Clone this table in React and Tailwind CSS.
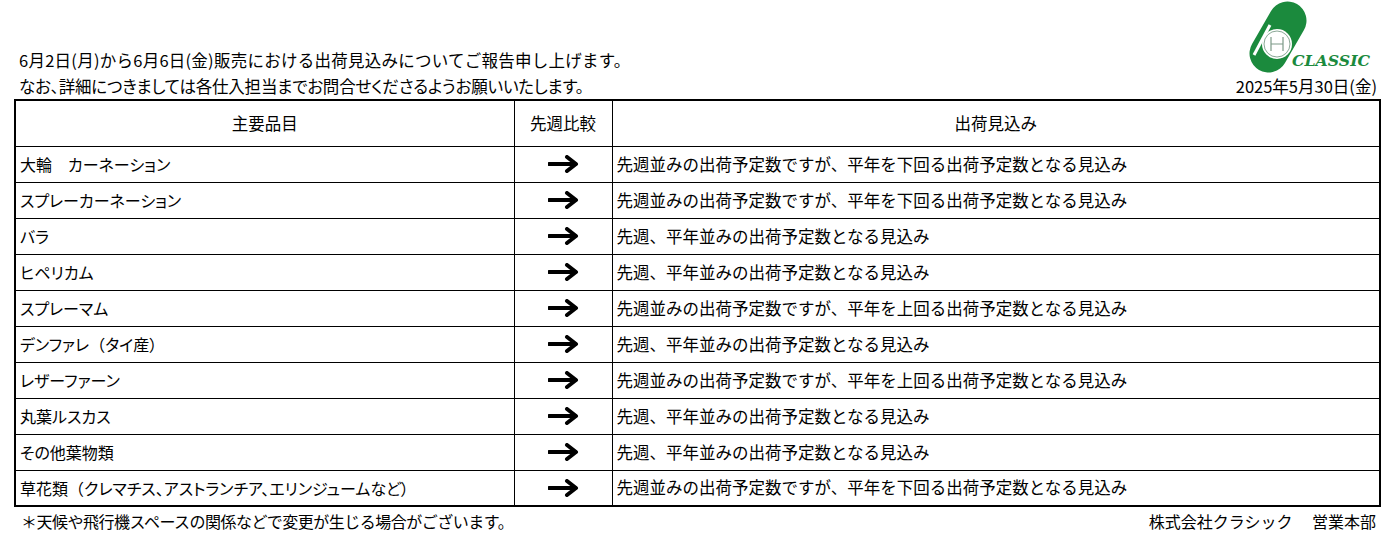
import React from "react";

const A = "先週並みの出荷予定数ですが、平年を下回る出荷予定数となる見込み";
const B = "先週、平年並みの出荷予定数となる見込み";
const C = "先週並みの出荷予定数ですが、平年を上回る出荷予定数となる見込み";

const rows = [
  ["大輪　カーネーション", A],
  ["スプレーカーネーション", A],
  ["バラ", B],
  ["ヒペリカム", B],
  ["スプレーマム", C],
  ["デンファレ（タイ産）", B],
  ["レザーファーン", C],
  ["丸葉ルスカス", B],
  ["その他葉物類", B],
  ["草花類（クレマチス、アストランチア、エリンジュームなど）", A],
];

function Name({ text }) {
  const idx = text.indexOf("（");
  if (idx < 0) return <>{text}</>;
  return (
    <>
      {text.slice(0, idx)}
      <span className="[font-feature-settings:normal]">（</span>
      {text.slice(idx + 1)}
    </>
  );
}

function Arrow() {
  return (
    <svg width="31" height="18" viewBox="0 0 31 18" className="block mx-auto">
      <path d="M1 9 H27" stroke="#000" strokeWidth="4" strokeLinecap="round" fill="none" />
      <path d="M19 2 L28 9 L19 16" stroke="#000" strokeWidth="4" strokeLinecap="round" strokeLinejoin="round" fill="none" />
    </svg>
  );
}

function Logo() {
  const g = "#1b8a3d";
  return (
    <svg width="135" height="72" viewBox="0 0 135 72" className="block">
      <g transform="rotate(-60 36 36)">
        <rect x="-2" y="17" width="76" height="38" rx="19" fill={g} />
      </g>
      <path d="M12 54 L28 24" stroke="#fff" strokeWidth="3" />
      <circle cx="35" cy="43" r="15" fill="#fff" />
      <circle cx="35" cy="43" r="13" fill="none" stroke="#8aa896" strokeWidth="1" />
      <path d="M29 36 V50 M41 36 V50 M29 43 H41" stroke="#7c9a88" strokeWidth="1.2" fill="none" />
      <text
        x="50"
        y="65"
        fontFamily="'DejaVu Serif', serif"
        fontWeight="900"
        fontStyle="italic"
        fontSize="15"
        fill={g}
        textLength="78"
        lengthAdjust="spacingAndGlyphs"
      >
        CLASSIC
      </text>
    </svg>
  );
}

export default function App() {
  return (
    <div className="w-[1389px] h-[538px] bg-white text-black text-[16.5px] font-['Noto_Sans_CJK_JP','Noto_Sans_CJK_SC',sans-serif] overflow-hidden">
      <div className="flex justify-between items-end h-[99px] pl-[19px] pr-[12px]">
        <div className="leading-[26px]">
          <div className="tracking-[0.25px]">6月2日(月)から6月6日(金)販売における出荷見込みについてご報告申し上げます。</div>
          <div className="[font-feature-settings:'palt'] tracking-[-0.2px]">なお、詳細につきましては各仕入担当までお問合せくださるようお願いいたします。</div>
        </div>
        <div className="flex flex-col items-end">
          <Logo />
          <div className="leading-[26px]">2025年5月30日(金)</div>
        </div>
      </div>
      <table className="ml-[14px] w-[1367px] border-collapse border-2 border-black table-fixed">
        <colgroup>
          <col className="w-[499px]" />
          <col className="w-[98px]" />
          <col />
        </colgroup>
        <thead>
          <tr className="h-[46px]">
            <th className="border border-black font-normal text-center">主要品目</th>
            <th className="border border-black font-normal text-center">先週比較</th>
            <th className="border border-black font-normal text-center">出荷見込み</th>
          </tr>
        </thead>
        <tbody>
          {rows.map(([name, desc], i) => (
            <tr key={i} className="h-[36px]">
              <td className="border border-black pl-[4px] whitespace-nowrap text-[16px] [font-feature-settings:'palt']">
                <Name text={name} />
              </td>
              <td className="border border-black">
                <Arrow />
              </td>
              <td className="border border-black pl-[4px] whitespace-nowrap">{desc}</td>
            </tr>
          ))}
        </tbody>
      </table>
      <div className="flex justify-between pl-[21px] pr-[13px] leading-[28px] text-[16px]">
        <div className="tracking-[-0.5px]">＊天候や飛行機スペースの関係などで変更が生じる場合がございます。</div>
        <div>株式会社クラシック　 営業本部</div>
      </div>
    </div>
  );
}
